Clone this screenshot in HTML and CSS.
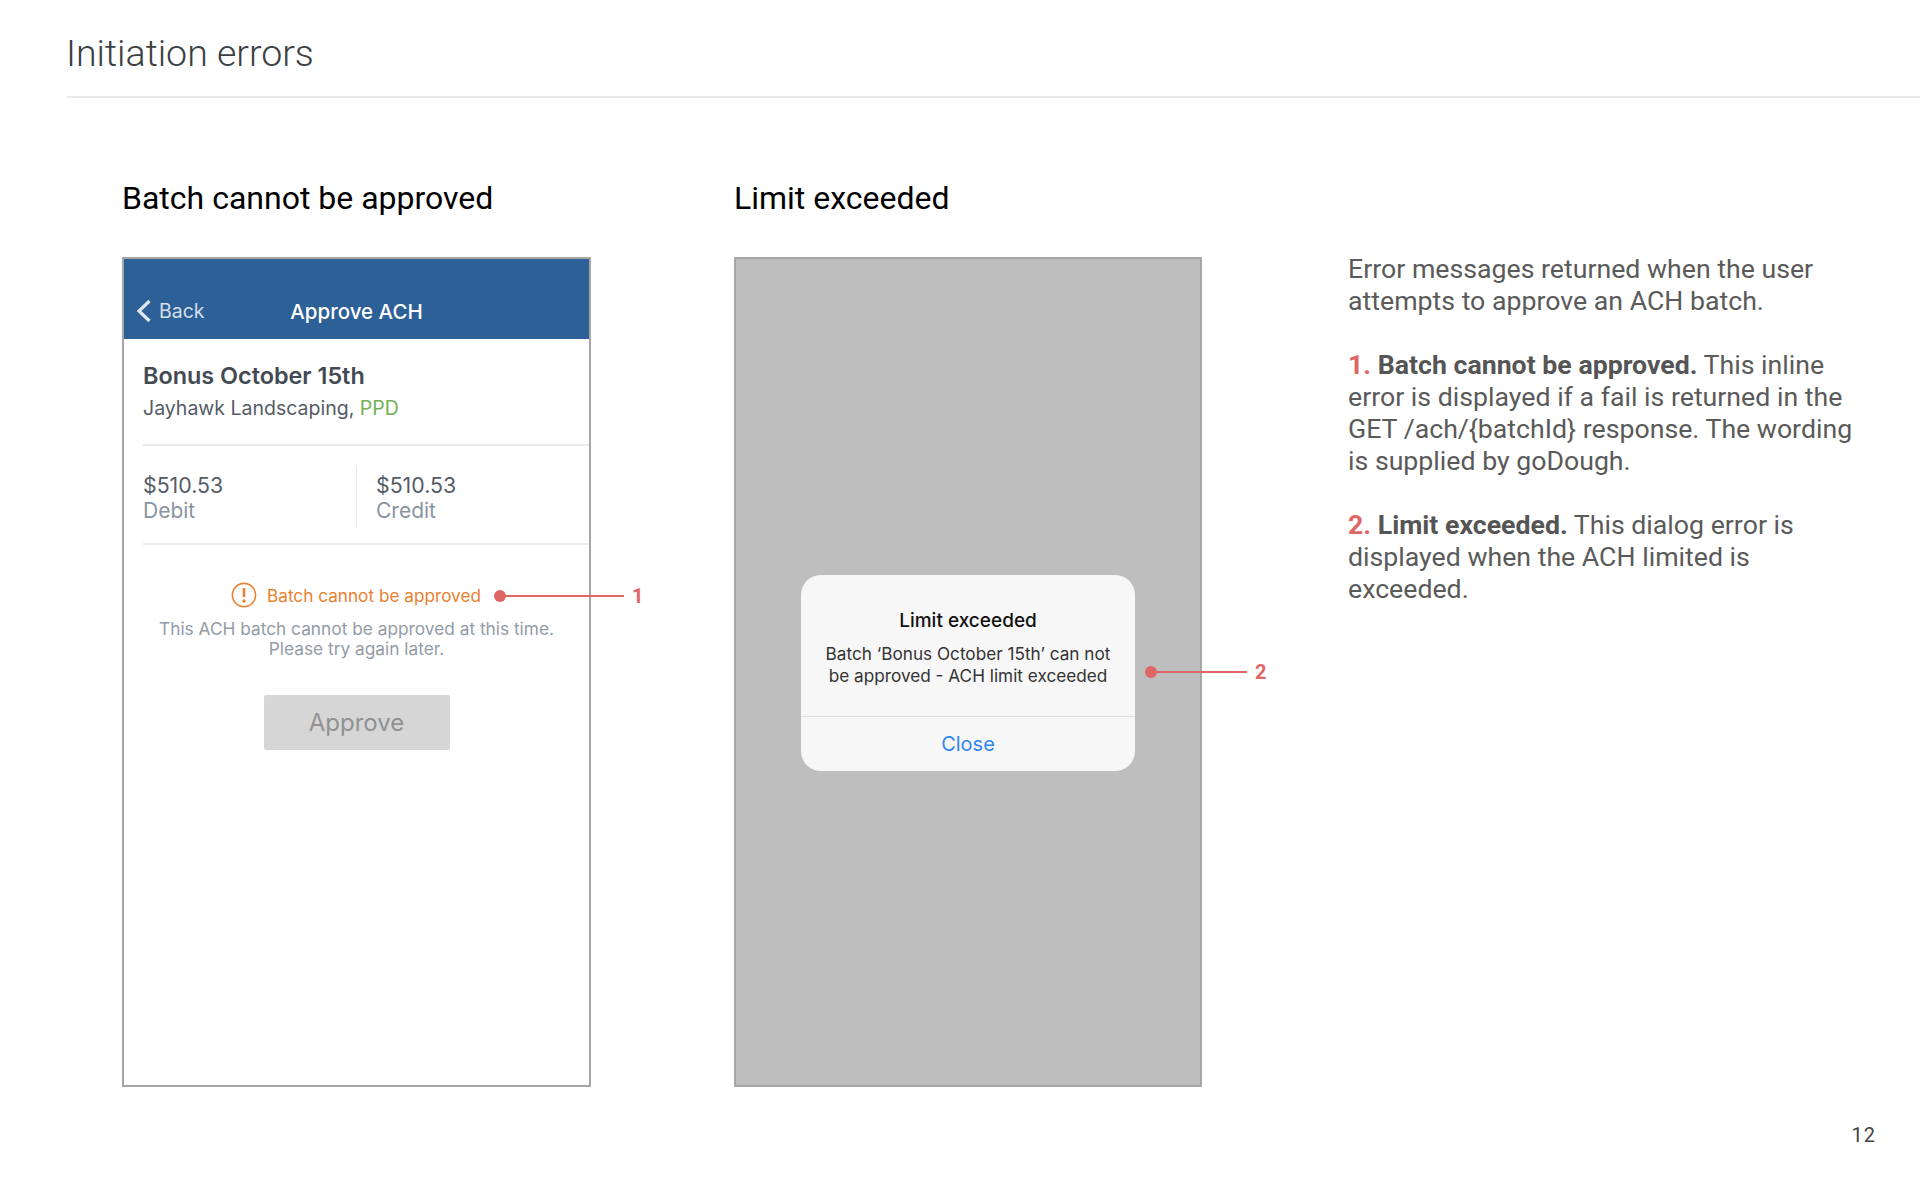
FILE: index.html
```html
<!DOCTYPE html>
<html lang="en">
<head>
<meta charset="utf-8">
<title>Initiation errors</title>
<link rel="stylesheet" href="styles.css">
</head>
<body>
<div class="slide">
  <header class="top">
    <h1 class="title">Initiation errors</h1>
  </header>
  <main class="content">
    <section class="col col-a">
      <h2 class="heading">Batch cannot be approved</h2>
      <div class="phone phone-a">
        <div class="navbar">
          <span class="back">
            <svg class="chev" width="16" height="24" viewBox="0 0 16 24"><path d="M13.5 2 L3 12 L13.5 22" fill="none" stroke="#dfe6ee" stroke-width="3.2"/></svg>
            Back
          </span>
          <span class="navtitle">Approve ACH</span>
        </div>
        <div class="info">
          <div class="batch">Bonus October 15th</div>
          <div class="company">Jayhawk Landscaping, <span class="ppd">PPD</span></div>
        </div>
        <div class="totals">
          <div class="total">
            <div class="amount">$510.53</div>
            <div class="label">Debit</div>
          </div>
          <div class="total total-r">
            <div class="amount">$510.53</div>
            <div class="label">Credit</div>
          </div>
        </div>
        <div class="errline">
          <svg class="erricon" width="26" height="26" viewBox="0 0 26 26"><circle cx="13" cy="13" r="11.6" fill="none" stroke="#e9812f" stroke-width="1.6"/><path d="M13 6V15" stroke="#e9812f" stroke-width="2.6" fill="none"/><circle cx="13" cy="19" r="1.7" fill="#e9812f"/></svg>
          <span class="errtext">Batch cannot be approved</span>
        </div>
        <p class="errhelp">This ACH batch cannot be approved at this time.<br>Please try again later.</p>
        <div class="btn">Approve</div>
      </div>
      <div class="callout callout-1"><i class="dot"></i><i class="line"></i><b class="num">1</b></div>
    </section>
    <section class="col col-b">
      <h2 class="heading">Limit exceeded</h2>
      <div class="phone phone-dim">
        <div class="dialog">
          <div class="dlg-body">
            <div class="dlg-title">Limit exceeded</div>
            <div class="dlg-msg">Batch ‘Bonus October 15th’ can not<br>be approved - ACH limit exceeded</div>
          </div>
          <div class="dlg-action">Close</div>
        </div>
      </div>
      <div class="callout callout-2"><i class="dot"></i><i class="line"></i><b class="num">2</b></div>
    </section>
    <section class="notes">
      <p>Error messages returned when the user attempts to approve an ACH batch.</p>
      <p><span class="red">1.</span> <strong>Batch cannot be approved.</strong> This inline error is displayed if a fail is returned in the GET /ach/{batchId} response. The wording is supplied by goDough.</p>
      <p><span class="red">2.</span> <strong>Limit exceeded.</strong> This dialog error is displayed when the ACH limited is exceeded.</p>
    </section>
  </main>
  <footer class="pageno">12</footer>
</div>
</body>
</html>
```
FILE: styles.css
```css
* { box-sizing: border-box; }
html, body { margin: 0; padding: 0; background: #fff; }
.slide {
  position: relative;
  width: 1920px;
  height: 1200px;
  overflow: hidden;
  font-family: Roboto, sans-serif;
}
.top {
  margin-left: 67px;
  height: 98px;
  border-bottom: 2px solid #e6e8ea;
  padding-top: 29px;
}
.title {
  margin: 0;
  margin-left: -1px;
  font-size: 37.5px;
  line-height: 48px;
  font-weight: 300;
  color: #3c4043;
}
.content {
  display: flex;
  padding-left: 122px;
  padding-top: 80px;
}
.col { position: relative; width: 468px; }
.col-a { margin-right: 144px; }
.col-b { margin-right: 146px; }
.heading {
  margin: 0 0 39px;
  font-size: 32px;
  line-height: 40px;
  font-weight: 400;
  color: #000;
}
.phone {
  width: 468px;
  height: 830px;
  border: 2px solid #a6a6a6;
  background: #fff;
  font-family: Inter, sans-serif;
  display: flex;
  flex-direction: column;
}
.phone-a { width: 469px; }
.phone-dim {
  background: #bebebe;
  align-items: center;
  justify-content: flex-start;
  padding-top: 316px;
}
.navbar {
  position: relative;
  height: 80px;
  background: #2d6096;
  flex: none;
}
.back {
  position: absolute;
  left: 12px;
  bottom: 16px;
  display: flex;
  align-items: center;
  gap: 7px;
  font-size: 19.5px;
  color: #d5deea;
}
.navtitle {
  display: block;
  text-align: center;
  padding-top: 38px;
  font-size: 20.5px;
  line-height: 30px;
  font-weight: 500;
  color: #fff;
}
.info {
  margin-left: 19px;
  height: 107px;
  padding-top: 22px;
  border-bottom: 2px solid #ebebeb;
}
.batch { font-size: 23.4px; line-height: 30px; font-weight: 600; color: #434a54; }
.company { font-size: 19.5px; line-height: 30px; margin-top: 2px; color: #555c66; }
.ppd { color: #74b053; }
.totals {
  margin-left: 19px;
  height: 99px;
  padding-top: 20px;
  border-bottom: 2px solid #ebebeb;
  display: flex;
}
.total { width: 214px; height: 62px; padding-top: 7px; }
.total-r { margin-left: -1px; border-left: 1px solid #e6e6e6; padding-left: 19px; }
.amount { font-size: 21.3px; line-height: 25px; color: #555c66; }
.label { font-size: 21px; line-height: 25px; color: #8a94a1; }
.errline {
  display: flex;
  justify-content: center;
  align-items: center;
  gap: 10px;
  margin-top: 37px;
  height: 26px;
  padding-right: 1px;
}
.errtext { font-size: 17.2px; color: #e9812f; }
.errhelp {
  margin: 11px 0 0;
  text-align: center;
  font-size: 17.3px;
  line-height: 20px;
  color: #939ba6;
}
.btn {
  align-self: center;
  margin-top: 36px;
  width: 186px;
  height: 55px;
  border-radius: 2px;
  background: #d6d6d6;
  color: #919191;
  font-size: 24px;
  line-height: 55px;
  text-align: center;
}
.dialog {
  width: 334px;
  height: 196px;
  border-radius: 20px;
  background: #f7f7f7;
  display: flex;
  flex-direction: column;
}
.dlg-body { height: 142px; padding-top: 31px; text-align: center; border-bottom: 1px solid #dcdcdc; }
.dlg-title { font-size: 19px; line-height: 30px; font-weight: 500; color: #111; }
.dlg-msg { margin-top: 7px; font-size: 17.2px; line-height: 22px; color: #333; }
.dlg-action { flex: 1; text-align: center; font-size: 20px; line-height: 54px; color: #2f86f0; }
.callout {
  position: absolute;
  display: flex;
  align-items: center;
}
.callout-1 { left: 372px; top: 406px; }
.callout-2 { left: 411px; top: 482px; }
.dot { width: 12px; height: 12px; border-radius: 50%; background: #e06666; flex: none; }
.line { height: 2px; background: #e06666; margin-left: -1px; flex: none; }
.callout-1 .line { width: 119px; }
.callout-2 .line { width: 91px; }
.num { font-size: 20px; line-height: 24px; color: #e06666; font-weight: 700; margin-left: 8px; font-family: Roboto, sans-serif; }
.notes {
  width: 510px;
  padding-top: 75px;
  font-size: 26.7px;
  line-height: 32px;
  color: #5a5a5a;
}
.notes p { margin: 0 0 32px; }
.notes strong { font-weight: 700; color: #555; }
.red { color: #e06666; font-weight: 700; }
.pageno {
  position: absolute;
  right: 44px;
  bottom: 53px;
  font-size: 20px;
  color: #444;
  letter-spacing: 1px;
}
```
